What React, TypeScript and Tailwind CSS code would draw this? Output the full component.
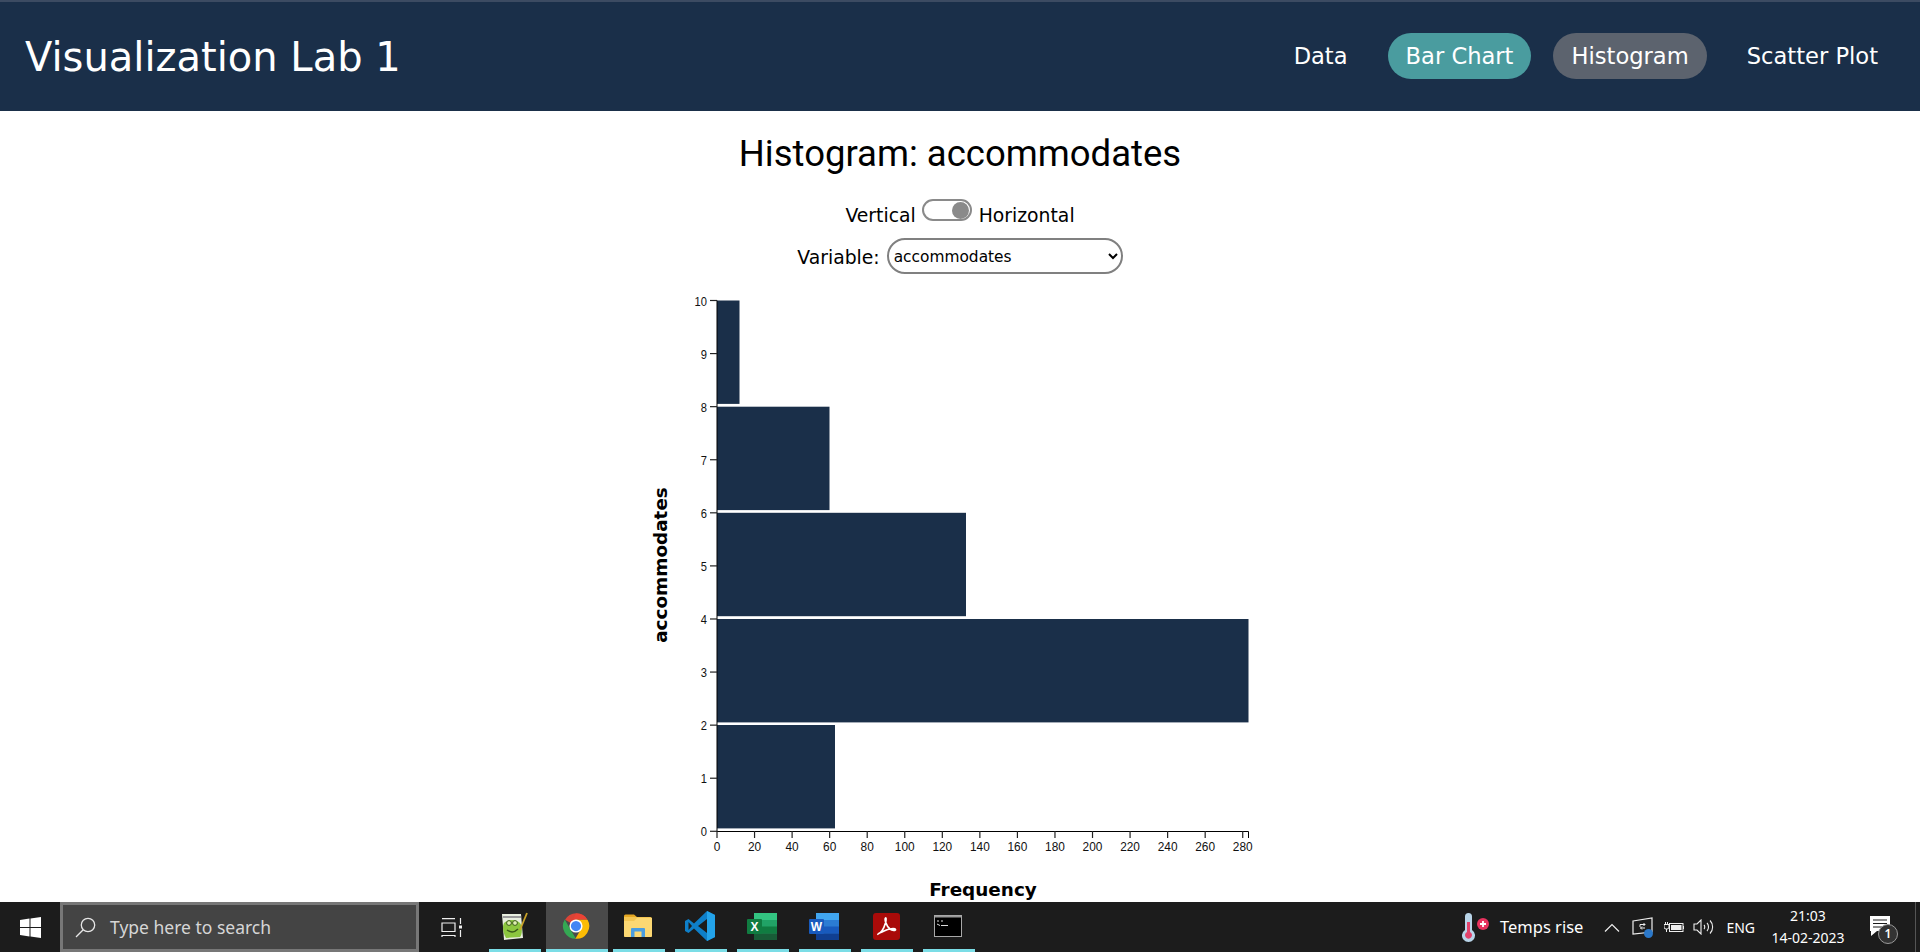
const tickFont = { fontFamily: '"Liberation Sans", sans-serif' };

const navLinks = [
  { label: 'Data', className: '' },
  { label: 'Bar Chart', className: 'bg-[#4a9c9f]' },
  { label: 'Histogram', className: 'bg-[#5c636e]' },
  { label: 'Scatter Plot', className: '' },
];

const bars = [
  { y: 300.5, right: 739.5 },
  { y: 406.7, right: 829.5 },
  { y: 512.8, right: 966 },
  { y: 619, right: 1248.5 },
  { y: 725, right: 835 },
];

function Chart() {
  const yTicks = Array.from({ length: 11 }, (_, i) => i);
  const xTicks = Array.from({ length: 15 }, (_, i) => i * 20);
  const yPos = (v: number) => 831.3 - v * 53.08;
  const xPos = (v: number) => 717 + v * 1.8776;

  return (
    <svg width="640" height="612" viewBox="640 290 640 612" className="block shrink-0">
      {bars.map((b) => (
        <rect key={b.y} x="717" y={b.y} width={b.right - 717} height="103.4" fill="#1a2f49" />
      ))}
      <path d="M717 300.5V831.5H1248.5V838" fill="none" stroke="#000" strokeWidth="1" />
      {yTicks.map((v) => (
        <g key={v}>
          <line x1="710" x2="717" y1={yPos(v)} y2={yPos(v)} stroke="#222" strokeWidth="1.2" />
          <text x="707" y={yPos(v) + 5} textAnchor="end" fontSize="13.5" textLength={String(v).length * 6.2} lengthAdjust="spacingAndGlyphs" fill="#111" style={tickFont}>{v}</text>
        </g>
      ))}
      {xTicks.map((v) => (
        <g key={v}>
          <line x1={xPos(v)} x2={xPos(v)} y1="831" y2="838" stroke="#222" strokeWidth="1.2" />
          <text x={xPos(v)} y="851" textAnchor="middle" fontSize="13.5" textLength={String(v).length * 6.6} lengthAdjust="spacingAndGlyphs" fill="#111" style={tickFont}>{v}</text>
        </g>
      ))}
      <text x="983" y="896" textAnchor="middle" fontSize="18.4" fontWeight="700" fill="#000" style={{ fontFamily: '"DejaVu Sans", sans-serif' }}>Frequency</text>
      <text transform="translate(667 565) rotate(-90)" textAnchor="middle" fontSize="18.4" fontWeight="700" fill="#000" style={{ fontFamily: '"DejaVu Sans", sans-serif' }}>accommodates</text>
    </svg>
  );
}

function Toggle() {
  return (
    <span className="relative ml-[6px] mr-[7px] mb-[12px] block h-[22px] w-[50px] rounded-full border-2 border-[#8a8a8a] bg-white">
      <span className="absolute right-[1px] top-[0.5px] h-[17px] w-[17px] rounded-full bg-[#8a8a8a]" />
    </span>
  );
}

function WindowsLogo() {
  return (
    <svg width="21" height="21" viewBox="0 0 21 21" fill="#fff">
      <path d="M0 3 9.5 1.6V10H0ZM10.5 1.5 21 0V10H10.5ZM0 11H9.5V19.4L0 18ZM10.5 11H21V21L10.5 19.5Z" />
    </svg>
  );
}

function SearchGlyph() {
  return (
    <svg width="21" height="21" viewBox="0 0 21 21" fill="none" stroke="#e6e6e6" strokeWidth="1.3">
      <circle cx="13" cy="8" r="6.7" />
      <path d="M8.2 12.8 1 20" />
    </svg>
  );
}

function TaskViewGlyph() {
  return (
    <svg width="21" height="19" viewBox="0 0 21 19" fill="none" stroke="#eee" strokeWidth="1.2">
      <path d="M1 0.600H14M1 5H14V13.500H1ZM1 19V17.500H14V19M19.500 0V6M19.500 12V19" />
      <rect x="18" y="7.500" width="3" height="3" fill="#eee" stroke="none" />
    </svg>
  );
}

function NotepadIcon() {
  return (
    <svg width="28" height="30" viewBox="0 0 28 30">
      <path d="M2 3H21L23 27 4 29Z" fill="#e9efe0" />
      <path d="M3 5H21V7H3Z" fill="#9a9a9a" />
      <path d="M4 12 C8 8 16 8 20 12 C23 16 22 24 20 26 L6 27 C3 22 2 16 4 12Z" fill="#8cc63f" />
      <circle cx="9" cy="12" r="2.4" fill="#dff0b0" stroke="#3a5a1a" />
      <circle cx="15" cy="12" r="2.4" fill="#dff0b0" stroke="#3a5a1a" />
      <path d="M7 19C11 22 15 21 18 18" stroke="#3a5a1a" strokeWidth="1.4" fill="none" />
      <path d="M20 19 27 2" stroke="#c9a227" strokeWidth="1.8" />
    </svg>
  );
}

function ChromeIcon() {
  return (
    <svg width="30" height="30" viewBox="0 0 48 48">
      <path d="M24 24 6.5 14A20.5 20.5 0 0 1 42 13.5H24Z" fill="#db4437" />
      <path d="M24 4A20 20 0 0 1 42 13.5H24L17 18Z" fill="#ea4335" />
      <path d="M6 13.5 16 31 24 44.5A20.5 20.5 0 0 1 6 13.5Z" fill="#34a853" />
      <path d="M42.5 14A20.5 20.5 0 0 1 23 44.5L33 27 24 14Z" fill="#fbbc05" />
      <circle cx="24" cy="24" r="10.5" fill="#fff" />
      <circle cx="24" cy="24" r="8.2" fill="#4285f4" />
    </svg>
  );
}

function FolderIcon() {
  return (
    <svg width="28" height="25" viewBox="0 0 28 25">
      <path d="M0 2a1.5 1.5 0 0 1 1.5-1.5H10L13 3H0Z" fill="#e5a823" />
      <path d="M0 3H26.5A1.5 1.5 0 0 1 28 4.500V21.500A1.500 1.500 0 0 1 26.500 23H1.500A1.500 1.500 0 0 1 0 21.500Z" fill="#f4c653" />
      <path d="M0 7H10L13 4H28V22A1.500 1.500 0 0 1 26.500 23H1.500A1.500 1.500 0 0 1 0 21.500Z" fill="#fcd873" />
      <path d="M7 23V15A1 1 0 0 1 8 14H20A1 1 0 0 1 21 15V23H17.500V17.500H10.500V23Z" fill="#4a9de0" />
    </svg>
  );
}

function VsCodeIcon() {
  return (
    <svg width="30" height="30" viewBox="0 0 30 30">
      <path d="M22 0 30 4V26L22 30 9 17.500 3.500 22 0 20V10L3.500 8 9 12.500Z" fill="#0e7fc9" />
      <path d="M22 0 30 4V26L22 30Z" fill="#23a3ea" />
      <path d="M22 8 13 15 22 22Z" fill="#1c1c1c" />
      <path d="M3.500 11 7 15 3.500 19Z" fill="#1c1c1c" />
    </svg>
  );
}

function ExcelIcon() {
  return (
    <svg width="30" height="27" viewBox="0 0 30 27">
      <rect x="7" y="0" width="23" height="27" rx="1.500" fill="#21a366" />
      <rect x="7" y="0" width="23" height="7" fill="#33c481" />
      <rect x="18" y="7" width="12" height="7" fill="#21a366" />
      <rect x="7" y="13.500" width="23" height="7" fill="#107c41" />
      <rect x="7" y="20.500" width="23" height="6.500" fill="#185c37" />
      <rect x="0" y="6" width="15" height="15" rx="1" fill="#107c41" />
      <text x="7.500" y="18" textAnchor="middle" fontSize="12" fontWeight="700" fill="#fff" style={tickFont}>X</text>
    </svg>
  );
}

function WordIcon() {
  return (
    <svg width="30" height="27" viewBox="0 0 30 27">
      <rect x="7" y="0" width="23" height="27" rx="1.500" fill="#2b7cd3" />
      <rect x="7" y="0" width="23" height="7" fill="#41a5ee" />
      <rect x="7" y="13.500" width="23" height="7" fill="#185abd" />
      <rect x="7" y="20.500" width="23" height="6.500" fill="#103f91" />
      <rect x="0" y="6" width="15" height="15" rx="1" fill="#185abd" />
      <text x="7.500" y="18" textAnchor="middle" fontSize="12" fontWeight="700" fill="#fff" style={tickFont}>W</text>
    </svg>
  );
}

function AcrobatIcon() {
  return (
    <svg width="27" height="27" viewBox="0 0 27 27">
      <rect width="27" height="27" rx="3" fill="#a90b09" />
      <path d="M5 21C8 20 11 15 12.500 10C13.500 6 13 4.500 12.500 5C11.500 6 13 13 17 16C19 17.500 23 18 22.500 16.500C22 15 16 15.500 11 18C8 19.500 5 20.500 5 21Z" fill="none" stroke="#fff" strokeWidth="1.700" />
    </svg>
  );
}

function TerminalIcon() {
  return (
    <svg width="28" height="22" viewBox="0 0 28 22">
      <rect x="0.500" y="0.500" width="27" height="21" fill="#000" stroke="#a8a8a8" />
      <rect x="1" y="1" width="26" height="1.500" fill="#9a9a9a" />
      <path d="M3 6H5M7 6H9M3 9 6 10.500M7 10.500H14" stroke="#ddd" strokeWidth="1" />
    </svg>
  );
}

function ThermometerIcon() {
  return (
    <svg width="29" height="29" viewBox="0 0 29 29">
      <path d="M3 3.500a3.500 3.500 0 0 1 7 0V17a6.500 6.500 0 1 1-7 0Z" fill="#b8d4e8" />
      <path d="M5 9h3v10a3.500 3.500 0 1 1-3 0Z" fill="#e2426b" />
      <circle cx="21" cy="11" r="6" fill="#e8335f" />
      <path d="M18 11H24M21 8V14" stroke="#fff" strokeWidth="1.800" />
    </svg>
  );
}

function TrayChevron() {
  return (
    <svg width="16" height="9" viewBox="0 0 16 9" fill="none" stroke="#eee" strokeWidth="1.200">
      <path d="M1 8.500 8 1.500 15 8.500" />
    </svg>
  );
}

function NetworkIcon() {
  return (
    <svg width="22" height="21" viewBox="0 0 22 21">
      <path d="M1 4 20 1V15L1 17Z" fill="none" stroke="#eee" strokeWidth="1.200" />
      <path d="M8 10V7.500H13M11.500 6 13 7.500 11.500 9M13 11H8.500M10 9.500 8.500 11 10 12.500" fill="none" stroke="#eee" />
      <circle cx="16.500" cy="16.500" r="4.500" fill="#2b78c9" />
    </svg>
  );
}

function BatteryIcon() {
  return (
    <svg width="21" height="11" viewBox="0 0 21 11" fill="none" stroke="#eee">
      <rect x="5.500" y="1.500" width="13.500" height="8" />
      <rect x="7" y="3" width="10.500" height="5" fill="#eee" stroke="none" />
      <path d="M19.500 4V7M0 2.500H5V5A2 2 0 0 1 3 7H2A2 2 0 0 1 0 5ZM1.500 0V2.500M3.500 0V2.500M2.500 7V10" />
    </svg>
  );
}

function SpeakerIcon() {
  return (
    <svg width="21" height="16" viewBox="0 0 21 16" fill="none" stroke="#eee" strokeWidth="1.100">
      <path d="M1 5H4L8 1V15L4 11H1Z" />
      <path d="M11 6C12 7 12 9 11 10M14 4C16 6 16 10 14 12M17 1.500C20.500 5 20.500 11 17 14.500" />
    </svg>
  );
}

function NotificationIcon() {
  return (
    <div className="relative h-[22px] w-[20px]">
      <svg width="20" height="21" viewBox="0 0 20 21" fill="#fff">
        <path d="M0 0H20V15H7L1 20V15H0Z" />
        <path d="M3 4H17M3 7.500H17M3 11H13" stroke="#1c1c1c" strokeWidth="1" />
      </svg>
      <span className="absolute left-[8px] top-[8px] flex h-[20px] w-[20px] items-center justify-center rounded-full border border-[#999] bg-[#333] text-[12px] font-semibold leading-none text-white">1</span>
    </div>
  );
}

const taskbarApps = [
  { id: 'notepad', icon: <NotepadIcon />, active: false },
  { id: 'chrome', icon: <ChromeIcon />, active: true },
  { id: 'folder', icon: <FolderIcon />, active: false },
  { id: 'code', icon: <VsCodeIcon />, active: false },
  { id: 'excel', icon: <ExcelIcon />, active: false },
  { id: 'word', icon: <WordIcon />, active: false },
  { id: 'acrobat', icon: <AcrobatIcon />, active: false },
  { id: 'terminal', icon: <TerminalIcon />, active: false },
];

function Taskbar() {
  return (
    <footer className="flex h-[50px] shrink-0 items-stretch bg-[#1c1c1c] text-white" style={{ fontFamily: '"Noto Sans", sans-serif' }}>
      <div className="flex w-[60px] items-center justify-center"><WindowsLogo /></div>
      <div className="flex w-[359px] items-center border-[3px] border-[#777] bg-[#444] pl-[12px] text-[17.5px] text-[#d6d6d6]">
        <SearchGlyph />
        <span className="ml-[14px]">Type here to search</span>
      </div>
      <div className="flex w-[65px] items-center justify-center"><TaskViewGlyph /></div>
      {taskbarApps.map((app) => (
        <div key={app.id} className={`relative flex w-[62px] items-center justify-center pb-[2px] pr-[2px] ${app.active ? 'bg-[#4a4a4a]' : ''}`}>
          {app.icon}
          <span className={`absolute bottom-0 h-[3px] bg-[#7bdde6] ${app.active ? 'inset-x-0' : 'inset-x-[5px]'}`} />
        </div>
      ))}
      <div className="ml-auto flex items-center">
        <ThermometerIcon />
        <span className="ml-[9px] text-[16.5px]">Temps rise</span>
        <div className="ml-[21px]"><TrayChevron /></div>
        <div className="ml-[12px]"><NetworkIcon /></div>
        <div className="ml-[10px]"><BatteryIcon /></div>
        <div className="ml-[8px]"><SpeakerIcon /></div>
        <span className="ml-[12px] text-[14px]">ENG</span>
        <div className="ml-[15px] flex w-[76px] flex-col items-center text-[14px] leading-[22px]">
          <span>21:03</span>
          <span>14-02-2023</span>
        </div>
        <div className="ml-[24px]"><NotificationIcon /></div>
        <span className="ml-[25px] h-full w-[1px] bg-[#555]" />
        <span className="w-[4px]" />
      </div>
    </footer>
  );
}

export default function App() {
  const dejavu = { fontFamily: '"DejaVu Sans", sans-serif' };

  return (
    <div className="flex h-screen flex-col overflow-hidden bg-white">
      <nav className="flex h-[111px] shrink-0 items-center justify-between border-t-2 border-[#3c4b62] bg-[#1a2f49] pb-[1px] pl-[25px] pr-[24px] text-white" style={dejavu}>
        <span className="pt-[2px] text-[40px]">Visualization Lab 1</span>
        <div className="flex items-center gap-[22px]">
          {navLinks.map((link) => (
            <a key={link.label} className={`flex h-[46px] items-center rounded-[23px] px-[18px] pt-[1px] text-[22.6px] ${link.className}`}>
              {link.label}
            </a>
          ))}
        </div>
      </nav>

      <main className="flex min-h-0 flex-1 flex-col items-center overflow-hidden">
        <h1 className="mt-[18px] text-[36.5px] leading-[50px] text-black" style={{ fontFamily: 'Roboto, sans-serif' }}>Histogram: accommodates</h1>
        <div className="mt-[24px] flex h-[26px] items-center text-[18.8px] text-black" style={dejavu}>
          <span>Vertical</span>
          <Toggle />
          <span>Horizontal</span>
        </div>
        <div className="mt-[9px] flex items-center text-[18.8px] text-black" style={dejavu}>
          <label className="pt-[4px]">Variable:</label>
          <select defaultValue="accommodates" className="ml-[7px] h-[36px] w-[236px] rounded-[18px] border-2 border-[#808080] bg-white pl-[1px] pt-[1px] text-[15.4px] text-black" style={dejavu}>
            <option>accommodates</option>
          </select>
        </div>
        <div className="mt-[16px]"><Chart /></div>
      </main>

      <Taskbar />
    </div>
  );
}
